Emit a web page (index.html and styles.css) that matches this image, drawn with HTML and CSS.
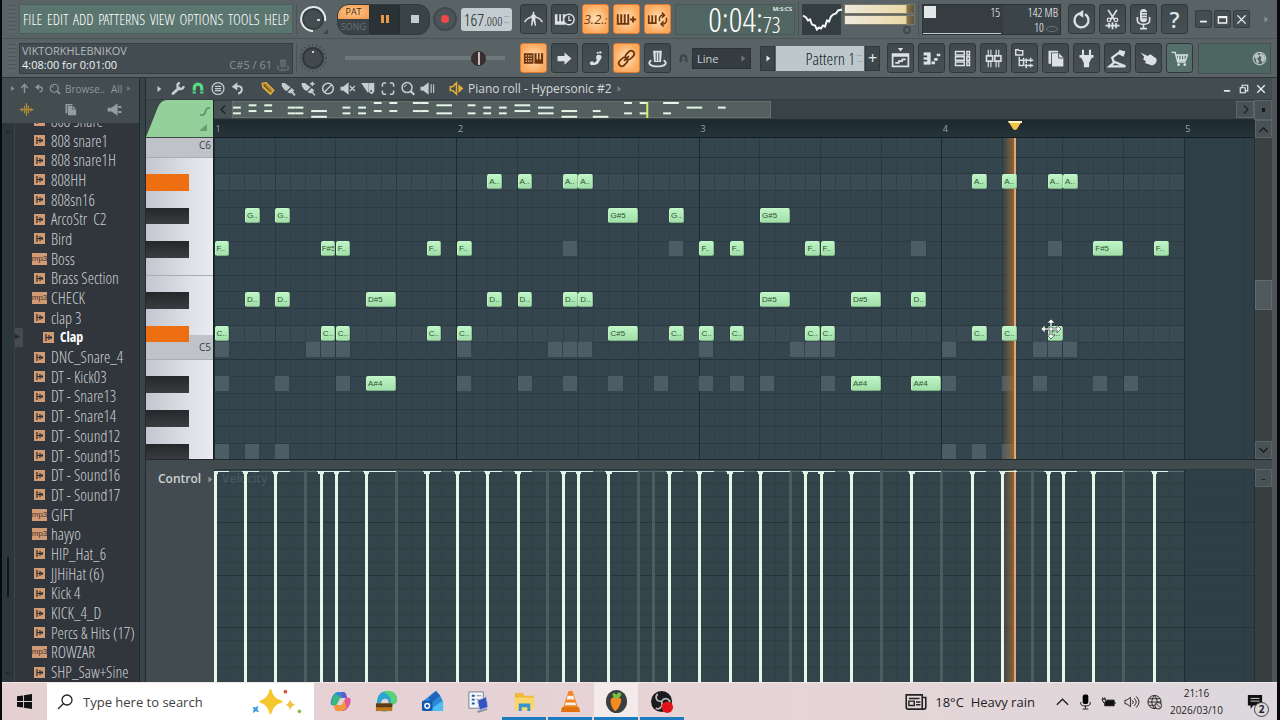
FILE: index.html
```html
<!DOCTYPE html>
<html lang="en">
<head>
<meta charset="utf-8">
<title>Piano roll - Hypersonic #2</title>
<link rel="stylesheet" href="styles.css">
</head>
<body>
<svg class="defs" aria-hidden="true">
  <defs>
    <symbol id="metronome" viewBox="0 0 24 24"><path d="M12 3v4M9.500 9Q4 11 2 15M14.500 9Q20 11 22 15" fill="none" stroke="currentColor" stroke-width="1.800"/><path d="M12 5l3 3-1 4 1 7h-1.500L12 13l-1.500 6H9l1-7-1-4z" fill="currentColor"/></symbol>
    <symbol id="wait" viewBox="0 0 24 24"><path d="M1 6h12v12H1z" fill="currentColor"/><path d="M5 6v8M9 6v8" stroke="#3c464a" stroke-width="2"/><circle cx="17" cy="12" r="6" fill="#3c464a" stroke="currentColor" stroke-width="1.600"/><path d="M17 8v5h3" fill="none" stroke="currentColor" stroke-width="1.400"/></symbol>
    <symbol id="keysplus" viewBox="0 0 24 24"><path d="M2 6v12M6 6v9M10 6v9M14 6v12M1 17h14M6 13v4M10 13v4" fill="none" stroke="currentColor" stroke-width="2.200"/><path d="M16 12h7M19.500 8.500v7" stroke="currentColor" stroke-width="2.200"/></symbol>
    <symbol id="keysloop" viewBox="0 0 24 24"><path d="M2 7v9M6 7v9M10 7v9M1 16h10" fill="none" stroke="currentColor" stroke-width="2"/><path d="M14.500 14a4 5 0 0 1 4.500-7M22 10a4 5 0 0 1-4.500 7M17 4l3 3-3 3M19 20l-3-3 3-3" fill="none" stroke="currentColor" stroke-width="1.700"/></symbol>
    <symbol id="typing" viewBox="0 0 24 24"><path d="M1 6h11v12H1z" fill="currentColor"/><path d="M3 9h8M3 12h8M3 15h8" stroke="#ffd9a0" stroke-width="1.200" stroke-dasharray="1.500 1.200"/><path d="M13 6h10v12H13z" fill="currentColor"/><path d="M16.300 6v7M19.700 6v7" stroke="#ffd9a0" stroke-width="1.500" fill="none"/></symbol>
    <symbol id="arrow" viewBox="0 0 24 24"><path d="M4 9h8V5l8 7-8 7v-4H4z" fill="currentColor"/></symbol>
    <symbol id="slide" viewBox="0 0 24 24"><path d="M14 8c2-1 5 0 5 2 0 3-2 3-3 6s-5 4-8 3c-1-1 0-2 2-2 3-1 4-3 3-5-1-1 0-3 1-4z" fill="currentColor"/><circle cx="8" cy="17.500" r="2.300" fill="currentColor"/><circle cx="14.500" cy="5.500" r="1.200" fill="currentColor"/><circle cx="17.500" cy="5" r="1.400" fill="currentColor"/></symbol>
    <symbol id="link" viewBox="0 0 24 24"><g transform="rotate(-45 12 12)" fill="none" stroke="currentColor" stroke-width="2"><rect x="1" y="8.500" width="11" height="7" rx="3.500"/><rect x="12" y="8.500" width="11" height="7" rx="3.500"/><path d="M8 12h8"/></g></symbol>
    <symbol id="hat" viewBox="0 0 24 24"><path d="M7 3h10l-1 13H8z" fill="currentColor"/><path d="M10.500 5v10M13.500 5v10" stroke="#3c464a"/><path d="M5 14c-5 3-2 7 7 7s12-4 7-7" fill="none" stroke="currentColor" stroke-width="2.200"/></symbol>
    <symbol id="magnet" viewBox="0 0 24 24"><path d="M6 20V11a6 6 0 0 1 12 0v9" fill="none" stroke="currentColor" stroke-width="5"/><path d="M3 16h18" stroke="#414b4f" stroke-width="1.500"/></symbol>
    <symbol id="playlist" viewBox="0 0 24 24"><path d="M9 0h6l-3 4z" fill="currentColor"/><path d="M3 7h18v14H3zM3 9h18" fill="none" stroke="currentColor" stroke-width="2"/><path d="M6 17h4v-2h4v-2h4" fill="none" stroke="currentColor" stroke-width="1.800"/></symbol>
    <symbol id="roll" viewBox="0 0 24 24"><path d="M3 5h8v14H3z" fill="currentColor"/><path d="M2 9.500h5M2 14.500h5" stroke="#3c464a" stroke-width="2"/><path d="M12 17h4M15 13h4M18 8h4" stroke="currentColor" stroke-width="3"/></symbol>
    <symbol id="rack" viewBox="0 0 24 24"><path d="M4 4h10v4H4zM4 10h10v4H4zM4 16h10v4H4zM17 4h3v4h-3zM17 10h3v4h-3zM17 16h3v4h-3z" fill="none" stroke="currentColor" stroke-width="1.700"/></symbol>
    <symbol id="mixer" viewBox="0 0 24 24"><path d="M6 2v6M9 2v6M15 2v6M18 2v6M6 16v6M9 16v6M15 16v6M18 16v6" stroke="currentColor" stroke-width="1.300"/><path d="M4 9h7v6H4zM13.500 9h7v6h-7z" fill="none" stroke="currentColor" stroke-width="1.800"/></symbol>
    <symbol id="tree" viewBox="0 0 24 24"><path d="M2 2h3l1 1h4v5H2zM6 10v10h5M6 14h5M11 11v9M14 12v5M14 18v5M12 14h10M12 20h10M19 11v5M19 18v4" fill="none" stroke="currentColor" stroke-width="1.600"/></symbol>
    <symbol id="pages" viewBox="0 0 24 24"><path d="M4 3h11v2H7v13H4z" fill="currentColor"/><path d="M8 6h8l5 5v10H8z" fill="currentColor"/><path d="M15.500 6v5.500H21" stroke="#3c464a" fill="none"/></symbol>
    <symbol id="plug" viewBox="0 0 24 24"><path d="M8 2v6M16 2v6" stroke="currentColor" stroke-width="2.400"/><path d="M4 8h16v3h-2l-3 6v5H9v-5l-3-6H4z" fill="currentColor"/></symbol>
    <symbol id="lamp" viewBox="0 0 24 24"><path d="M3 21h18L9 16zM8 17L6 11l8-6" fill="none" stroke="currentColor" stroke-width="2.600"/><path d="M14 2l7 2-2 6-6-3z" fill="currentColor"/></symbol>
    <symbol id="hand" viewBox="0 0 24 24"><path d="M3 5l8 4 3-2 7 5c1 4-1 7-5 8l-8-3 1-2-3-2 1-3z" fill="currentColor"/></symbol>
    <symbol id="cart" viewBox="0 0 24 24"><path d="M3 5h4l3 11h9M8 8h13l-2 6H9M11 8v6M14 8v6M17 8v6" fill="none" stroke="currentColor" stroke-width="1.600"/><circle cx="11" cy="19" r="1.500" fill="currentColor"/><circle cx="18" cy="19" r="1.500" fill="currentColor"/></symbol>
    <symbol id="globe" viewBox="0 0 24 24"><circle cx="12" cy="12" r="10" fill="#4c6660" stroke="currentColor" stroke-width="2"/><path d="M3 8l5-4 4 3-2 4-3 1 4 3-1 6-3-3-1-5zM13 3l7 4 1 6-4 6-3-5 1-4-3-3z" fill="currentColor"/></symbol>
    <symbol id="undo" viewBox="0 0 24 24"><path d="M9 5.500a8 8 0 1 0 7 0.500" fill="none" stroke="currentColor" stroke-width="2.600"/><path d="M14 1v9L7 5.500z" fill="currentColor"/></symbol>
    <symbol id="scissors" viewBox="0 0 24 24"><path d="M7 1l7 11M17 1l-7 11M4 19h16M8 16v6M12 15v8M16 16v6" stroke="currentColor" stroke-width="2"/><circle cx="8" cy="12.500" r="2" fill="none" stroke="currentColor" stroke-width="1.500"/><circle cx="16" cy="12.500" r="2" fill="none" stroke="currentColor" stroke-width="1.500"/></symbol>
    <symbol id="mic" viewBox="0 0 24 24"><rect x="8" y="0" width="8" height="15" rx="4" fill="currentColor"/><path d="M10 4h6M10 7h6M10 10h6" stroke="#3c464a"/><path d="M5 9v4c0 6 14 6 14 0V9M12 18v4M8 22.500h8" fill="none" stroke="currentColor" stroke-width="1.900"/></symbol>
    <symbol id="wrench" viewBox="0 0 24 24"><path d="M4 20l10-9" stroke="currentColor" stroke-width="4.500" stroke-linecap="round"/><path d="M21 8a5 5 0 1 1-6-5" fill="none" stroke="currentColor" stroke-width="3.500"/></symbol>
    <symbol id="menu" viewBox="0 0 24 24"><circle cx="12" cy="12" r="9.500" fill="none" stroke="currentColor" stroke-width="2"/><path d="M7 8.500h10M7 12h10M7 15.500h10" stroke="currentColor" stroke-width="2"/></symbol>
    <symbol id="back" viewBox="0 0 24 24"><path d="M8 9c6-2 11 0 10 6-1 3-3 5-6 5" fill="none" stroke="currentColor" stroke-width="3"/><path d="M11 2v13L2 9z" fill="currentColor"/></symbol>
    <symbol id="pencil" viewBox="0 0 24 24"><path d="M3 4l6-1 12 12-5 6L4 10z" fill="#6d5a38" stroke="currentColor" stroke-width="2.600"/><path d="M8 6l11 11M5 9l12 11" stroke="currentColor" stroke-width="1.600"/></symbol>
    <symbol id="brush" viewBox="0 0 24 24"><path d="M2 8V3h5l9 7-6 6-4-2z" fill="currentColor"/><path d="M11 18l7-7 4 4-5 5z" fill="currentColor"/><path d="M19 18l4 5" stroke="currentColor" stroke-width="3"/></symbol>
    <symbol id="brushplus" viewBox="0 0 24 24"><path d="M2 8V3h5l9 7-6 6-4-2z" fill="currentColor"/><path d="M11 18l7-7 4 4-5 5z" fill="currentColor"/><path d="M19 18l4 5M19 1v7M15.500 4.500h7" stroke="currentColor" stroke-width="2.400"/></symbol>
    <symbol id="ban" viewBox="0 0 24 24"><circle cx="12" cy="12" r="8.500" fill="none" stroke="currentColor" stroke-width="2.400"/><path d="M6 18L18 6" stroke="currentColor" stroke-width="2.400"/></symbol>
    <symbol id="mute" viewBox="0 0 24 24"><path d="M0 9h4l9-7v20l-9-7H0z" fill="currentColor"/><path d="M15 8l8 8M23 8l-8 8" stroke="currentColor" stroke-width="2"/></symbol>
    <symbol id="slice" viewBox="0 0 24 24"><path d="M1 3h11v16z" fill="currentColor"/><path d="M12.500 3H22v14l-4 4-5.500-4z" fill="currentColor"/><circle cx="17" cy="16" r="1.700" fill="#454f52"/></symbol>
    <symbol id="select" viewBox="0 0 24 24"><path d="M3 9V6q0-3 3-3h3M15 3h3q3 0 3 3v3M21 15v3q0 3-3 3h-3M9 21H6q-3 0-3-3v-3" fill="none" stroke="currentColor" stroke-width="2.400"/></symbol>
    <symbol id="zoomer" viewBox="0 0 24 24"><circle cx="10.500" cy="10.500" r="8" fill="none" stroke="currentColor" stroke-width="2.400"/><path d="M16 16l6 6" stroke="currentColor" stroke-width="3.500"/><path d="M6 10a5 5 0 0 1 4-4" fill="none" stroke="currentColor" stroke-width="1.500"/></symbol>
    <symbol id="playback" viewBox="0 0 24 24"><path d="M0 9h4l9-7v20l-9-7H0z" fill="currentColor"/><path d="M17 5v14M21 5v14" stroke="currentColor" stroke-width="1.800"/></symbol>
    <symbol id="speaker" viewBox="0 0 24 24"><path d="M2 9h4l6-6v18l-6-6H2z" fill="none" stroke="currentColor" stroke-width="2.400"/><path d="M15 5l8 7-8 7z" fill="currentColor"/></symbol>
    <symbol id="up" viewBox="0 0 24 24"><path d="M12 22V6M5 11l7-8 7 8" fill="none" stroke="currentColor" stroke-width="3"/></symbol>
    <symbol id="wave" viewBox="0 0 24 24"><path d="M1 12h22M5 9v6M9 6v12M12 2v20M15 6v12M19 9v6" stroke="currentColor" stroke-width="2"/></symbol>
    <symbol id="horn" viewBox="0 0 24 24"><path d="M1 9h6l10-7v20L7 15H1z" fill="currentColor"/><path d="M18 8h5M18 16h5" stroke="currentColor" stroke-width="3"/></symbol>
    <symbol id="sample" viewBox="0 0 11 11"><path d="M0 0h11v11H0z" fill="#d09a75"/><path d="M3 2v7M3 5.500h6M6 3v5M8 4v3" stroke="#2e2a2c" stroke-width="1.200"/></symbol>
    <symbol id="chev-up" viewBox="0 0 16 16"><path d="M3 11l5-5 5 5" fill="none" stroke="currentColor" stroke-width="1.600"/></symbol>
    <symbol id="chev-right" viewBox="0 0 16 16"><path d="M6 3l5 5-5 5" fill="none" stroke="currentColor" stroke-width="1.600"/></symbol>
    <symbol id="tri" viewBox="0 0 8 8"><path d="M2 0l5 4-5 4z" fill="currentColor"/></symbol>
    <symbol id="min" viewBox="0 0 16 16"><path d="M3 11h10" stroke="currentColor" stroke-width="2.600"/></symbol>
    <symbol id="max" viewBox="0 0 16 16"><path d="M2 4h12v9H2zM2 5h12" fill="none" stroke="currentColor" stroke-width="2"/></symbol>
    <symbol id="restore" viewBox="0 0 16 16"><path d="M2 6h8v8H2zM5 5V2h9v9h-3" fill="none" stroke="currentColor" stroke-width="1.800"/></symbol>
    <symbol id="close" viewBox="0 0 16 16"><path d="M2 2l12 12M14 2L2 14" stroke="currentColor" stroke-width="2"/></symbol>
  </defs>
</svg>

<div class="app">
  <header class="toolbars">
    <div class="bar">
      <span class="grip"></span>
      <nav class="menu">
        <button>FILE</button><button>EDIT</button><button>ADD</button><button>PATTERNS</button><button>VIEW</button><button>OPTIONS</button><button>TOOLS</button><button>HELP</button>
      </nav>
      <div class="knob-cell">
        <svg class="knob" viewBox="0 0 30 30"><circle cx="15" cy="15" r="10" fill="#444d50" stroke="#363e41" stroke-width="2"/><path d="M15 27A12 12 0 1 1 27 17" fill="none" stroke="#e4eae9" stroke-width="2"/><path d="M19 16h3" stroke="#cfd6d6" stroke-width="2"/><path d="M30 25v5h-5z" fill="#3c4548"/></svg>
      </div>
      <div class="transport">
        <div class="mode"><button class="pat">PAT</button><button class="song">SONG</button></div>
        <button class="pause" aria-label="Pause"><i></i><i></i></button>
        <button class="stop" aria-label="Stop"><i></i></button>
      </div>
      <button class="record" aria-label="Record"><i></i></button>
      <output class="tempo">167<small>.000</small><span class="spin"></span></output>
      <div class="tools">
        <button class="tb" aria-label="Metronome"><svg><use href="#metronome"/></svg></button>
        <button class="tb" aria-label="Wait for input"><svg><use href="#wait"/></svg></button>
        <button class="tb on count">3.2.<small>:</small></button>
        <button class="tb on" aria-label="Blend notes"><svg><use href="#keysplus"/></svg></button>
        <button class="tb on" aria-label="Loop record"><svg><use href="#keysloop"/></svg></button>
      </div>
      <output class="clock"><span class="big">0:04:</span><span class="cents"><span class="unit">M:S:CS</span><span class="hundredths">73</span></span></output>
      <div class="scope">
        <svg class="scope-wave" viewBox="0 0 39 30"><path d="M1 11l3 2 2 3 2-1 2 5 3 1 2 4 2-2 2 1 2-3 2 1 2-6 2 1 2-5 2-2 3-1 2-3 4-1" fill="none" stroke="#f1f5f5" stroke-width="2"/></svg>
        <div class="meters"><i></i><i></i><b></b></div>
      </div>
      <div class="cpu">
        <svg class="cpu-graph" viewBox="0 0 80 30" preserveAspectRatio="none"><path d="M1 1h12v12H1z" fill="#e1e6e7"/><path d="M0 28.500h78" stroke="#c4cbcd"/></svg>
        <span class="cpu-n">15</span><span class="cpu-m">142 MB<br>10 <em></em></span>
      </div>
      <div class="tools right-tools">
        <button class="tb" aria-label="Undo"><svg><use href="#undo"/></svg></button>
        <button class="tb" aria-label="Cut"><svg><use href="#scissors"/></svg></button>
        <button class="tb" aria-label="Record audio"><svg><use href="#mic"/></svg></button>
        <button class="tb help">?</button>
      </div>
      <div class="win">
        <button aria-label="Minimize"><svg><use href="#min"/></svg></button>
        <button aria-label="Maximize"><svg><use href="#max"/></svg></button>
        <button aria-label="Close"><svg><use href="#close"/></svg></button>
      </div>
      <svg class="tri far"><use href="#tri"/></svg>
    </div>
    <div class="bar">
      <span class="grip"></span>
      <div class="hint"><span>VIKTORKHLEBNIKOV</span><span class="hint-line"><b>4:08:00 for 0:01:00</b><em>C#5 / 61</em><svg><use href="#hat"/></svg></span></div>
      <div class="knob-cell">
        <svg class="knob" viewBox="0 0 30 30"><circle cx="15" cy="15" r="13" fill="none" stroke="#3c4548" stroke-width="2" stroke-dasharray="1 3"/><circle cx="15" cy="15" r="10" fill="#41494c" stroke="#30383a" stroke-width="2"/><path d="M15 8v2" stroke="#c6cccc" stroke-width="2"/></svg>
      </div>
      <label class="pitch"><input type="range" min="0" max="100" value="87" aria-label="Pitch"></label>
      <div class="tools">
        <button class="tb on" aria-label="Typing keyboard"><svg><use href="#typing"/></svg></button>
        <button class="tb" aria-label="Step"><svg><use href="#arrow"/></svg></button>
        <button class="tb" aria-label="Slide"><svg><use href="#slide"/></svg></button>
        <button class="tb on" aria-label="Link"><svg><use href="#link"/></svg></button>
        <button class="tb" aria-label="Performance"><svg><use href="#hat"/></svg></button>
      </div>
      <div class="snap"><svg class="snap-mag"><use href="#magnet"/></svg><button class="snap-val">Line<svg class="tri"><use href="#tri"/></svg></button></div>
      <div class="pattern"><button class="pat-side" aria-label="Pattern menu"><svg class="tri"><use href="#tri"/></svg></button><button class="pat-name">Pattern 1<span class="spin"></span></button><button class="pat-side">+</button></div>
      <div class="tools views">
        <button class="tb" aria-label="Playlist"><svg><use href="#playlist"/></svg></button>
        <button class="tb" aria-label="Piano roll"><svg><use href="#roll"/></svg></button>
        <button class="tb" aria-label="Channel rack"><svg><use href="#rack"/></svg></button>
        <button class="tb" aria-label="Mixer"><svg><use href="#mixer"/></svg></button>
        <button class="tb" aria-label="Browser"><svg><use href="#tree"/></svg></button>
        <button class="tb" aria-label="Files"><svg><use href="#pages"/></svg></button>
        <button class="tb" aria-label="Plugins"><svg><use href="#plug"/></svg></button>
        <button class="tb" aria-label="Tempo tapper"><svg><use href="#lamp"/></svg></button>
        <button class="tb" aria-label="Touch"><svg><use href="#hand"/></svg></button>
        <button class="tb shop" aria-label="Shop"><svg><use href="#cart"/></svg></button>
      </div>
      <div class="news"><svg><use href="#globe"/></svg></div>
    </div>
  </header>

  <main class="work">
    <aside class="browser">
      <div class="browser-head">
        <div class="crumbs"><svg class="tri"><use href="#tri"/></svg><svg><use href="#up"/></svg><svg><use href="#back"/></svg><svg class="mag"><use href="#zoomer"/></svg><span>Browse..</span><span class="all">All</span><svg class="tri dim"><use href="#tri"/></svg></div>
        <div class="tabs"><svg class="gold"><use href="#wave"/></svg><svg><use href="#pages"/></svg><svg><use href="#horn"/></svg></div>
      </div>
      <div class="browser-body">
        <div class="strip"><svg><use href="#chev-up"/></svg><i></i><svg class="flip"><use href="#chev-up"/></svg></div>
        <ul class="files" id="files"></ul>
      </div>
    </aside>
    <div class="divider"></div>
    <section class="roll">
      <div class="roll-title">
        <svg class="tri"><use href="#tri"/></svg>
        <svg><use href="#wrench"/></svg><svg class="green"><use href="#magnet"/></svg><svg><use href="#menu"/></svg><svg><use href="#back"/></svg>
        <svg class="gold first-tool"><use href="#pencil"/></svg><svg><use href="#brush"/></svg><svg><use href="#brushplus"/></svg><svg><use href="#ban"/></svg><svg><use href="#mute"/></svg><svg><use href="#slice"/></svg><svg><use href="#select"/></svg><svg><use href="#zoomer"/></svg><svg><use href="#playback"/></svg>
        <svg class="gold title-icon"><use href="#speaker"/></svg>
        <h1>Piano roll - Hypersonic #2</h1><svg class="tri dim"><use href="#tri"/></svg>
        <div class="roll-win"><button aria-label="Minimize"><svg><use href="#min"/></svg></button><button aria-label="Restore"><svg><use href="#restore"/></svg></button><button aria-label="Close"><svg><use href="#close"/></svg></button></div>
      </div>
      <div class="corner"><svg viewBox="0 0 67 38" preserveAspectRatio="none"><path d="M0 37L12 7Q15 0 21 0h46v37z" fill="#93d09a"/><path d="M54 15h3c3 0 2-7 5-7h2" fill="none" stroke="#5f8a68" stroke-width="1.500"/><path d="M53 31l8-7v7z" fill="#6a9a72"/></svg></div>
      <div class="overview"><button class="ov-btn" aria-label="Scroll left"><svg class="flip-x"><use href="#chev-right"/></svg></button><svg class="map" id="map"></svg><span class="ov-rest"></span><button class="ov-btn lit" aria-label="Scroll right"><svg><use href="#chev-right"/></svg></button></div>
      <button class="dot-btn" aria-label="Options"><i></i></button>
      <div class="ruler" id="ruler"></div>
      <div class="keys" id="keys"></div>
      <div class="grid" id="grid"></div>
      <div class="vscroll"><button aria-label="Up"><svg><use href="#chev-up"/></svg></button><span class="track"><i></i></span><button aria-label="Down"><svg class="flip"><use href="#chev-up"/></svg></button></div>
      <div class="splitter"></div>
      <div class="control"><span>Control</span><svg class="tri"><use href="#tri"/></svg></div>
      <div class="velocity" id="velocity"></div>
      <div class="vscroll low"><button>-</button></div>
    </section>
  </main>

  <footer class="taskbar">
    <button class="start" aria-label="Start"><svg viewBox="0 0 16 16"><path d="M0 2.500l6.500-1v6H0zM7.500 1.300L16 0v7.500H7.500zM0 8.500h6.500v6L0 13.500zM7.500 8.500H16V16l-8.500-1.300z" fill="#111"/></svg></button>
    <label class="search"><svg viewBox="0 0 16 16"><circle cx="10" cy="6" r="5" fill="none" stroke="#222" stroke-width="1.300"/><path d="M6.500 9.500L1 15" stroke="#222" stroke-width="1.300"/></svg><input type="text" placeholder="Type here to search" aria-label="Search"><svg class="sparkle" viewBox="0 0 58 30"><path d="M22 2q2 10 12 12.500Q24 17 22 27q-2-10-11-12.500Q20 12 22 2z" fill="#f5c62d" stroke="#f5c62d" stroke-width="2" stroke-linejoin="round"/><path d="M43 12q1 5 6 6-5 1-6 6-1-5-5-6 4-1 5-6z" fill="#f2c33c"/><path d="M3 20l3 1 3-2-1 4 2 3-4-1-3 2 1-4z" fill="#3d9bd8"/><circle cx="38" cy="4" r="2" fill="#d85b34"/><circle cx="53" cy="25" r="2" fill="#8bc04b"/></svg></label>
    <div class="apps">
      <button aria-label="Copilot"><svg viewBox="0 0 24 24"><path d="M9 2h6c3 0 3 3 4 6h-7c-3 0-4 8-6 8H3C0 15 3 3 9 2z" fill="#2c8bd8"/><path d="M3 11l3-7 7 4c-3 1-4 8-6 8H3z" fill="#39b77c"/><path d="M15 22H9c-3 0-3-3-4-6h7c3 0 4-8 6-8h3c4 1 0 13-6 14z" fill="#e0559b"/><path d="M5 16h7c2 0 3-3 4-6l2 8c-1 3-4 4-9 4-3 0-3-3-4-6z" fill="#f39a3a"/><path d="M13 2c4 0 4 2 6 6h-6z" fill="#6a55cf"/></svg></button>
      <button aria-label="Edge"><svg viewBox="0 0 24 24"><path d="M2 13C2 5 7 1 13 1c6 0 10 4 10 9 0 4-4 6-8 5-2-1 0-3-2-5-3-2-7 0-7 5 0 4 4 7 8 7C7 24 2 20 2 13z" fill="#2ba6d0"/><path d="M9 2c8-4 15 2 14 9-1 4-5 5-8 4 4-4 0-11-6-13z" fill="#5bd27a"/><path d="M1 14h17v8H1z" fill="#b97a1e"/><path d="M1 14h17v4H1z" fill="#5b3a17"/></svg></button>
      <button aria-label="Outlook"><svg viewBox="0 0 24 24"><path d="M3 11L15 1l5 5 3 6v10H7z" fill="#2e88d8"/><path d="M8 8l8-7 4 5-9 7z" fill="#1f62ba"/><path d="M7 22l16-11v11z" fill="#4dbdf2"/><rect x="1" y="11" width="11" height="11" rx="2" fill="#1358ad"/><circle cx="6.500" cy="16.500" r="2.500" fill="none" stroke="#fff" stroke-width="1.500"/></svg></button>
      <button aria-label="Notes"><svg viewBox="0 0 24 24"><path d="M2 2h15v17H2z" fill="#f6f8fb" stroke="#6f7f93"/><path d="M5 6h3M5 10h3M5 14h3" stroke="#2454a5" stroke-width="2"/><path d="M10 6h5M10 10h5" stroke="#7d8ba0"/><path d="M11 11l9-4 2 11-9 3z" fill="#3154c0" stroke="#bdc7df"/><path d="M11 23l10-3" stroke="#8893a6" stroke-width="2"/></svg></button>
      <button class="run" aria-label="File Explorer"><svg viewBox="0 0 24 24"><path d="M2 3h8l2 3h10v14H2z" fill="#f0b93a"/><path d="M2 8h20v13H2z" fill="#fbd668"/><path d="M6 22v-8h12v8h-3v-4H9v4z" fill="#3a92d0"/></svg></button>
      <button class="run" aria-label="VLC"><svg viewBox="0 0 24 24"><path d="M10 1h4l6 18H4z" fill="#f1851f"/><path d="M9 6h6l1 4H8zM7 13h10l1 3H6z" fill="#f7f0ea"/><path d="M3 18h18l1 5H2z" fill="#e0710f"/></svg></button>
      <button class="run active" aria-label="FL Studio"><svg viewBox="0 0 24 24"><ellipse cx="12" cy="12" rx="11" ry="12" fill="#3a4040"/><path d="M6 10c2-4 9-4 11 0 0 4-3 10-6 12-3-1-6-8-5-12z" fill="#f58a1f"/><path d="M11 9C8 7 7 4 9 3c1 0 2 1 3 2 1-3 4-3 5-1 0 3-3 5-6 5z" fill="#79c142"/></svg></button>
      <button class="run" aria-label="OBS"><svg viewBox="0 0 24 24"><circle cx="11" cy="12" r="11" fill="#1b1b1d"/><path d="M11 12c-6 0-7-5-4-8M11 12c3-5 8-3 9 1M11 12c2 5-2 9-6 7" fill="none" stroke="#bbb" stroke-width="1.800"/><circle cx="17" cy="18" r="6" fill="#e0121a"/></svg></button>
    </div>
    <div class="tray">
      <svg class="paper" viewBox="0 0 24 18"><path d="M1 1h18v16H3q-2 0-2-2zM19 4h4v11q0 2-2 2h-3M4 5h12" fill="none" stroke="#222" stroke-width="1.800"/><path d="M4 8h6v5H4zM12 9h5M12 12h5" fill="none" stroke="#222" stroke-width="1.600"/></svg>
      <span class="weather">18°C&nbsp; Heavy rain</span>
      <svg viewBox="0 0 16 16"><path d="M2 11l6-6 6 6" fill="none" stroke="#222" stroke-width="1.500"/></svg>
      <svg viewBox="0 0 16 16"><rect x="5" y="0" width="6" height="10" rx="2"/><path d="M3 8v2c0 3 10 3 10 0V8M8 12v3M5 15.500h6" fill="none" stroke="#111"/></svg>
      <svg viewBox="0 0 16 16"><path d="M6 6h8v6H4V9" fill="#111" stroke="#111"/><path d="M15 8v2M1 5h4v2L3 9zM2 3v2M4 3v2" stroke="#111" fill="none"/></svg>
      <svg viewBox="0 0 16 16"><path d="M1 6h2l4-3v10l-4-3H1zM9 6q2 2 0 4M11 4q4 4 0 8M13 2q6 6 0 12" fill="none" stroke="#222"/></svg>
      <svg viewBox="0 0 16 16"><circle cx="8" cy="8" r="7" fill="none" stroke="#222"/><path d="M1 8h14M8 1q-6 7 0 14M8 1q6 7 0 14M2 4.500h12M2 11.500h7" fill="none" stroke="#222"/><circle cx="12" cy="12" r="3.500" fill="#dcd5d8" stroke="#222"/><path d="M10 10l4 4" stroke="#222"/></svg>
      <time class="time">21:16<br>2026/03/10</time>
      <button class="notif" aria-label="Notifications"><svg viewBox="0 0 18 18"><path d="M1 1h16v12H7l-3 4v-4H1z" fill="#111"/><path d="M4 5h10M4 8h10" stroke="#ddd"/></svg><b>2</b></button>
    </div>
  </footer>
</div>
<script src="app.js"></script>
</body>
</html>
```

FILE: styles.css
```css
* { box-sizing: border-box; }
html, body { height: 100%; margin: 0; }
body { background: #08090a; font-family: "Open Sans", "Noto Sans", sans-serif; font-size: 12px; color: #c9cfd1; overflow: hidden; }
button { font: inherit; color: inherit; border: 0; padding: 0; margin: 0; background: none; }
svg { display: block; overflow: visible; }
.defs { position: absolute; width: 0; height: 0; }
.app { height: 100vh; display: flex; flex-direction: column; }
.menu, .tempo, .clock, .cpu, .pat-name, .files { font-family: "Open Sans Condensed Light", "Liberation Sans Narrow", "Open Sans", sans-serif; font-weight: 400; }

/* toolbars */
.toolbars { margin: 0 3px 0 2px; background: #596366; border-bottom: 1px solid #2d3537; }
.bar { display: flex; align-items: center; height: 38px; padding-left: 5px; }
.bar + .bar { border-top: 1px solid #4a5356; height: 39px; }
.grip { width: 8px; height: 28px; margin-right: 4px; background: repeating-linear-gradient(#4b5558 0 1px, #5c666a 1px 4px); }
.menu { width: 274px; height: 30px; background: #5b756f; border: 1px solid #4b5d59; display: flex; align-items: center; justify-content: space-between; padding: 0 3px; font-size: 15px; color: #fff; }
.hint { width: 274px; height: 31px; background: #434c50; border: 1px solid #363e41; padding: 0 2px; font-size: 11px; line-height: 14px; display: flex; flex-direction: column; color: #b4babc; }
.hint-line { display: flex; }
.hint b { font-weight: 400; color: #eef2f2; flex: 1; }
.hint em { font-style: normal; color: #8b9395; }
.hint svg { width: 14px; height: 14px; color: #6a7376; margin-left: 4px; }
.knob-cell { width: 41px; border-left: 1px solid #4a5356; margin-left: 3px; padding-left: 1px; }
.knob { width: 30px; height: 30px; }
.transport { display: flex; width: 93px; height: 31px; border-radius: 12px; overflow: hidden; background: #3a4347; border: 1px solid #333b3e; }
.mode { width: 31px; display: flex; flex-direction: column; font-size: 9px; line-height: 13px; text-align: center; }
.pat { background: radial-gradient(#ffc98c, #f39a4d); color: #4b2a0c; height: 14px; }
.song { color: #687073; flex: 1; }
.pause, .stop { flex: 1; display: flex; align-items: center; justify-content: center; gap: 2px; border-left: 1px solid #262d30; }
.pause { background: #2b3236; }
.pause i { width: 3px; height: 8px; background: #e89a48; }
.stop i { width: 8px; height: 8px; background: #c5cccd; }
.record { width: 24px; height: 24px; border-radius: 50%; background: #4b5458; border: 2px solid #40494c; margin: 0 4px 0 3px; display: flex; align-items: center; justify-content: center; }
.record i { width: 8px; height: 8px; border-radius: 50%; background: #f04848; }
.tempo { width: 51px; height: 23px; border-radius: 3px; background: #c3cccf; color: #11191c; display: flex; align-items: center; justify-content: center; font-size: 17px; }
.tempo small { font-size: 13px; padding-top: 3px; }
.spin { width: 5px; height: 7px; margin-left: 2px; border: solid #a0abae; border-width: 1px 0; }
.tools { display: flex; gap: 4px; margin-left: 8px; }
.tb { width: 27px; height: 30px; border-radius: 3px; background: linear-gradient(#3f484c, #475054); border: 1px solid #30383b; color: #dce2e3; display: flex; align-items: center; justify-content: center; }
.tb svg { width: 21px; height: 21px; flex: none; }
.tb.on { background: radial-gradient(#ffe3b8, #fba85c 75%); border-color: #dd7c35; color: #70350c; }
.tb.count { font-size: 13px; font-style: italic; }
.tb.shop { background: #55706b; }
.tb.help { font-size: 22px; font-weight: 600; }
.clock { width: 120px; height: 31px; margin-left: 4px; background: #516661; border: 1px solid #475a56; color: #fff; display: flex; justify-content: flex-end; line-height: 29px; font-size: 34px; }
.cents { display: flex; flex-direction: column; width: 31px; }
.unit { font: 600 6px/8px "Open Sans", sans-serif; text-align: right; padding-right: 2px; }
.hundredths { font-size: 22px; line-height: 22px; }
.scope { display: flex; margin-left: 3px; padding: 0 3px; border: solid #4a5356; border-width: 0 1px; height: 36px; align-items: center; gap: 3px; }
.scope-wave { width: 39px; height: 31px; background: #343d41; }
.meters { width: 71px; height: 30px; display: flex; flex-direction: column; gap: 1px; }
.meters i { height: 10px; background: linear-gradient(90deg, #efe9dd, #ead9a6 88%, #8b7546 90%, #5b5440); border: 1px solid #7c7a6c; }
.meters b { width: 8px; height: 8px; border-radius: 50%; border: 2px solid #3f484b; align-self: flex-end; margin: 0 4px; }
.cpu { width: 139px; height: 31px; margin-left: 3px; background: #353d41; border: 1px solid #2c3437; display: flex; position: relative; color: #fff; font-size: 12px; line-height: 15px; }
.cpu-graph { position: absolute; left: 0; top: 0; width: 80px; height: 30px; }
.cpu-n { width: 77px; text-align: right; }
.cpu-m { flex: 1; text-align: right; padding-right: 2px; background: #3b4448; margin-left: 3px; }
.cpu em { display: inline-block; width: 12px; height: 6px; border: 1px solid #6b7578; border-radius: 50%; }
.right-tools { margin-left: 7px; }
.win { display: flex; gap: 2px; margin-left: 7px; flex: 0 0 auto; }
.win button { width: 17px; height: 18px; background: #444d51; border: 1px solid #363e41; border-radius: 2px; display: flex; align-items: center; justify-content: center; color: #f0f3f3; }
.win svg { width: 11px; height: 11px; }
.tri { width: 6px; height: 7px; flex: none; }
.far { margin-left: auto; margin-right: 8px; color: #899194; }
.pitch { width: 175px; padding-left: 8px; display: flex; }
.pitch input { appearance: none; width: 160px; height: 16px; margin: 0; background: linear-gradient(#69737600 6px, #6e787b 6px 10px, #69737600 10px); }
.pitch input::-webkit-slider-thumb { appearance: none; width: 15px; height: 15px; border-radius: 50%; background: linear-gradient(90deg, #3d2f31 6px, #c9c0c0 6px 8px, #3d2f31 8px); border: 1px solid #2c2627; }
.snap { display: flex; align-items: center; margin-left: 7px; gap: 3px; }
.snap-mag { width: 11px; height: 13px; color: #3c4548; }
.snap-val { width: 59px; height: 21px; background: #343c40; border: 1px solid #2b3235; display: flex; align-items: center; justify-content: space-between; padding: 0 4px; color: #ccd3d5; font-size: 11px; }
.snap-val .tri { color: #70797c; }
.pattern { display: flex; margin-left: 9px; gap: 1px; align-items: center; }
.pat-side { width: 15px; height: 25px; background: #3d464a; border: 1px solid #31393c; display: flex; align-items: center; justify-content: center; font-size: 16px; color: #e6ebeb; }
.pat-name { width: 88px; height: 25px; background: #bcc8cc; color: #11191c; display: flex; align-items: center; justify-content: flex-end; font-size: 17px; padding-right: 2px; }
.views { margin-left: 7px; }
.news { flex: 1; height: 31px; margin: 0 6px 0 5px; background: #4e6661; border: 1px solid #45514f; display: flex; align-items: center; justify-content: flex-end; padding-right: 3px; color: #b9c3c3; }
.news svg { width: 15px; height: 15px; }

/* work area */
.work { flex: 1; min-height: 0; display: flex; margin: 0 3px 0 2px; background: #424c50; border-right: 5px solid #4c5659; }
.browser { width: 137px; display: flex; flex-direction: column; background: #31353c; }
.browser-head { height: 45px; background: #434d50; flex: none; }
.crumbs { display: flex; align-items: center; height: 21px; gap: 4px; padding-left: 8px; color: #8f9799; font-size: 10px; }
.crumbs svg { width: 11px; height: 11px; }
.crumbs .mag { width: 12px; height: 12px; }
.crumbs svg.tri { width: 5px; height: 7px; }
.dim { color: #747d80; }
.all { margin-left: 2px; }
.tabs { display: flex; justify-content: space-between; padding: 3px 17px 0 17px; color: #949c9e; }
.tabs svg { width: 15px; height: 15px; }
.gold { color: #e3ad38; }
.tabs .gold { color: #b08b35; }
.browser-body { flex: 1; min-height: 0; display: flex; overflow: hidden; }
.strip { width: 13px; background: #2c373b; display: flex; flex-direction: column; align-items: center; justify-content: space-between; color: #151b1d; padding: 4px 0; border-right: 1px solid #3b4448; }
.strip svg { width: 9px; height: 9px; }
.strip i { width: 2px; height: 40px; background: #12181a; margin-top: auto; margin-bottom: 72px; }
.flip { transform: scaleY(-1); }
.flip-x { transform: scaleX(-1); }
.files { list-style: none; margin: -12px 0 0; padding: 0; flex: 1; min-width: 0; display: flex; flex-direction: column; font-size: 16px; color: #cdd2d4; }
.files li { flex: 1 1 0; min-height: 0; display: flex; align-items: center; line-height: 16px; padding-left: 19px; gap: 6px; white-space: pre; }
.files svg { width: 11px; height: 11px; flex: none; }
.files .mp3 { padding-left: 17px; gap: 4px; }
.files .badge { width: 15px; height: 12px; background: #d09a75; color: #453126; font: 8px/11px "Liberation Sans Narrow", "Liberation Sans", sans-serif; display: flex; justify-content: center; }
.files .picked { padding-left: 0; color: #fff; font-family: "Open Sans Condensed", "Liberation Sans Narrow", sans-serif; font-weight: 700; font-size: 14px; }
.files .picked::before { content: "▸"; width: 8px; height: 19px; margin-right: 14px; background: #454c50; color: #22282b; font-size: 9px; }
.divider { width: 7px; background: #37444a; border: solid #222a2d; border-width: 0 1px; }

/* piano roll */
.roll { flex: 1; min-width: 0; display: grid; grid-template-columns: 68px minmax(0, 1fr) 18px; grid-template-rows: 22px 20px 18px minmax(0, 321fr) 10px minmax(0, 213fr); }
.roll-title { grid-column: 1 / 4; display: flex; align-items: center; gap: 4px; padding-left: 10px; background: #434c50; color: #c7cdcf; border-bottom: 1px solid #363f42; }
.roll-title svg { width: 16px; height: 15px; flex: none; }
.roll-title svg.tri { width: 6px; height: 8px; margin-right: 4px; }
.roll-title .green { color: #58de80; }
.roll-title .gold { color: #e3ad38; }
.roll-title svg.dim { color: #747d80; }
.roll-title .first-tool { margin-left: 10px; }
.roll-title .title-icon { margin-left: 9px; width: 15px; }
.roll-title h1 { font-size: 12px; font-weight: 400; margin: 0; color: #d4dadb; }
.roll-win { margin-left: auto; display: flex; gap: 7px; padding-right: 6px; color: #eef2f2; }
.roll-win svg { width: 10px; height: 10px; }
.corner { grid-row: 2 / 4; background: #3f494c; border-right: 1px solid #1b2427; }
.corner svg { width: 100%; height: 100%; }
.overview { grid-column: 2; display: flex; background: #394245; padding: 1px 0; border-bottom: 1px solid #242e31; }
.ov-btn { width: 18px; background: #485154; display: flex; align-items: center; justify-content: center; color: #1c2426; }
.ov-btn svg { width: 13px; height: 13px; }
.ov-btn.lit { border: 1px solid #5d676a; }
.map { flex: 538 1 0; height: 17px; background: #54605f; border: 1px solid #65716f; }
.ov-rest { flex: 466 1 0; }
.dot-btn { background: #485154; border: 1px solid #5a6467; display: flex; align-items: center; justify-content: center; }
.dot-btn i { width: 3px; height: 4px; background: #15191b; }
.ruler { grid-column: 2; background: linear-gradient(#1c292f, #27343a); border-bottom: 1px solid #121b1f; position: relative; font-size: 9px; line-height: 17px; color: #98a3a6; }
.ruler span, .ruler svg { position: absolute; }
.ruler span { padding-left: 1px; }
.ruler svg { width: 14px; height: 10px; margin-left: -7px; top: 1px; }
.keys { grid-column: 1; grid-row: 4; background: linear-gradient(90deg, #c3c6ce, #dfe2e8 70%, #e9ebf0); position: relative; overflow: hidden; border-right: 1px solid #152024; color: #3b4145; font-size: 10px; line-height: 14px; }
.keys .black { position: absolute; left: 0; width: 43px; background: linear-gradient(#25282a, #3a3d3f); }
.keys .pressed { background: #ee6f12; }
.keys .line { position: absolute; left: 0; right: 0; border-top: 1px solid #a9adb2; }
.keys .ckey { position: absolute; left: 0; right: 0; background: #bfc2c7; padding-right: 2px; display: flex; align-items: center; justify-content: flex-end; }
.keys .ckey.first { align-items: flex-start; }
.grid, .velocity { grid-column: 2; position: relative; overflow: hidden; background: #35454d; }
.velocity { background: #34444b; border-top: 1px solid #29363b; }
.lines { position: absolute; inset: 0; width: 100%; height: 100%; }
.note, .ghost { position: absolute; height: 15px; }
.note { background: linear-gradient(#bdf5c4, #a2dfaa); border: 1px solid; border-color: #c6f7cc #8cc294 #7eb286 #c0f2c6; border-radius: 2px; color: #2f5236; font: 8px/13px "Liberation Sans", sans-serif; padding-left: 1px; overflow: hidden; white-space: nowrap; }
.note.full { padding-left: 0; }
.ghost { background: #4d5d66; }
.playhead { position: absolute; top: 0; bottom: 0; width: 13px; margin-left: -12px; background: linear-gradient(90deg, #a8692f00, #a8692fcc); border-right: 2px solid #e0a877; }
.pointer { position: absolute; width: 20px; height: 20px; margin: -10px 0 0 -10px; }
.splitter { grid-column: 1 / 4; background: #414b4e; border-top: 1px solid #20292c; }
.control { grid-column: 1; display: flex; align-items: flex-start; gap: 6px; padding: 1px 0 0 12px; color: #cdd3d4; font-size: 12px; font-weight: 600; line-height: 17px; }
.control .tri { margin-top: 6px; color: #8f999b; }
.vel-label { position: absolute; left: 8px; top: 0; font-size: 12px; line-height: 18px; font-weight: 600; color: #46575f; }
.vscroll { grid-column: 3; grid-row: 3 / 5; display: flex; flex-direction: column; background: #363e40; border-left: 1px solid #252e31; }
.vscroll button { height: 18px; background: #485154; border: 1px solid #5a6467; display: flex; align-items: center; justify-content: center; color: #12181a; }
.vscroll svg { width: 13px; height: 13px; }
.track { flex: 1; display: flex; flex-direction: column; background: #3a4143; }
.track::before { content: ""; flex: 143; }
.track::after { content: ""; flex: 131; }
.track i { height: 30px; background: #50595c; border: 1px solid #626c6f; }
.low { grid-row: 6; }

/* taskbar */
.taskbar { height: 38px; flex: none; display: flex; background: linear-gradient(90deg, #e4cfd1, #e7d4d6 60%, #dcd8dd); margin: 0 3px 0 2px; color: #1d1d1f; border-top: 1px solid #f1e6e6; }
.start { width: 45px; display: flex; align-items: center; justify-content: center; }
.start svg { width: 15px; height: 15px; }
.search { width: 267px; background: #fff; display: flex; align-items: center; padding: 0 8px 0 10px; gap: 10px; }
.search > svg { width: 16px; height: 16px; flex: none; }
.search .sparkle { width: 58px; height: 28px; }
.search input { border: 0; outline: 0; flex: 1; min-width: 0; font: 13px "Open Sans", sans-serif; padding: 0; background: none; }
.search input::placeholder { color: #3e3e40; }
.apps { display: flex; gap: 2px; margin-left: 4px; }
.apps button { width: 44px; display: flex; align-items: center; justify-content: center; border-bottom: 3px solid transparent; padding-top: 2px; }
.apps svg { width: 23px; height: 23px; }
.apps .run { border-image: linear-gradient(90deg, transparent 3px, #1f7bc0 3px 41px, transparent 41px) 3; }
.apps .active { background: #f4eaeb; border-image: none; border-color: #1f7bc0; }
.tray { margin-left: auto; display: flex; align-items: center; gap: 8px; }
.tray > svg { width: 15px; height: 16px; }
.tray .paper { width: 22px; height: 16px; }
.weather { font-size: 13px; margin-right: 12px; white-space: nowrap; }
.time { font-size: 10px; line-height: 17px; text-align: center; }
.notif { position: relative; width: 46px; height: 30px; display: flex; align-items: center; padding-left: 16px; }
.notif svg { width: 16px; height: 16px; }
.notif b { position: absolute; right: 8px; bottom: 0; width: 15px; height: 15px; border-radius: 50%; border: 1px solid #444; background: #dcd8dd; font-size: 10px; line-height: 13px; }
```

FILE: app.js
```js
const STEPS = 68.65;   // sixteenth steps visible across the grid
const HEIGHT = 321;    // design height of the note grid
const ROW = 16.86;     // height of one semitone row
const TOP = 19;        // top of the B5 row
const PLAY = 52.84;    // playhead position in steps

const px = s => ((s + 0.04) / STEPS * 100) + '%';
const span = s => (s / STEPS * 100) + '%';
const py = r => ((TOP + ROW * r) / HEIGHT * 100) + '%';
const rows = { 'A#5': 1, 'G#5': 3, 'F#5': 5, 'D#5': 8, 'C#5': 10, 'C5': 11, 'A#4': 13, 'F#4': 17 };

// [step, length, showFullName]
const notes = {
  'A#5': [[18], [20], [23], [24], [50], [52], [55], [56]],
  'G#5': [[2], [4], [26, 2], [30], [36, 2]],
  'F#5': [[0], [7, 1, 1], [8], [14], [16], [32], [34], [39], [40], [58, 2], [62]],
  'D#5': [[2], [4], [10, 2], [18], [20], [23], [24], [36, 2], [42, 2], [46]],
  'C#5': [[0], [7], [8], [14], [16], [26, 2], [30], [32], [34], [39], [40], [50], [52], [55]],
  'A#4': [[10, 2], [42, 2], [46, 2]]
};
const ghosts = {
  'F#5': [23, 30, 46, 55],
  'C5': [0, 6, 7, 8, 16, 22, 23, 24, 32, 38, 39, 40, 48, 54, 55, 56],
  'A#4': [0, 4, 8, 16, 20, 23, 26, 29, 32, 34, 36, 40, 48, 52, 54, 58, 60],
  'F#4': [0, 2, 4, 48, 50, 52]
};
const ghostStems = [6, 12, 22, 28, 29, 38, 44, 48, 54, 60];
const files = ['808 Snare', '808 snare1', '808 snare1H', '808HH', '808sn16', 'ArcoStr  C2', 'Bird', '*Boss', 'Brass Section', '*CHECK', 'clap 3', '>Clap', 'DNC_Snare_4', 'DT - Kick03', 'DT - Snare13', 'DT - Snare14', 'DT - Sound12', 'DT - Sound15', 'DT - Sound16', 'DT - Sound17', '*GIFT', '*hayyo', 'HIP_Hat_6', 'JJHiHat (6)', 'Kick 4', 'KICK_4_D', 'Percs & Hits (17)', '*ROWZAR', 'SHP_Saw+Sine'];

const byId = id => document.getElementById(id);
const add = (parent, cls, style, text) => {
  const el = document.createElement('div');
  el.className = cls;
  Object.assign(el.style, style);
  if (text) el.textContent = text;
  parent.append(el);
  return el;
};

byId('files').innerHTML = files.map(f => {
  const name = f.replace(/^[*>]/, '').replace('&', '&amp;');
  if (f[0] === '*') return `<li class="mp3"><span class="badge">mp3</span>${name}</li>`;
  return `<li class="${f[0] === '>' ? 'picked' : ''}"><svg><use href="#sample"/></svg><span>${name}</span></li>`;
}).join('');

const vline = (s, color) => `<line x1="${px(s)}" x2="${px(s)}" y1="0" y2="100%" stroke="${color}"/>`;
const hline = (y, color) => `<line x1="0" x2="100%" y1="${y}" y2="${y}" stroke="${color}"/>`;
let verticals = `<rect x="${px(64)}" width="10%" height="100%" fill="#2f3f47"/>`;
for (let s = 0; s <= 68; s++) verticals += vline(s, s % 16 === 0 ? '#1d2b31' : s % 4 === 0 ? '#2a393f' : '#30404a');
const svgOpen = '<svg class="lines" shape-rendering="crispEdges">';

// note grid
const grid = byId('grid');
let bands = '';
for (const r of [1, 10]) bands += `<rect x="0" width="100%" y="${py(r)}" height="${ROW / HEIGHT * 100}%" fill="#3a4b53"/>`;
for (let r = 0; r < 18; r++) bands += hline(py(r), r === 0 || r === 12 ? '#22323a' : '#2c3b43');
grid.innerHTML = svgOpen + bands + verticals + '</svg>';
for (const [key, list] of Object.entries(ghosts))
  for (const s of list) add(grid, 'ghost', { left: px(s), top: py(rows[key]), width: span(0.93) });
add(grid, 'playhead', { left: px(PLAY) });
for (const [key, list] of Object.entries(notes))
  for (const [s, len = 1, full] of list)
    add(grid, full ? 'note full' : 'note', { left: px(s), top: py(rows[key]), width: span(len - 0.03) }, len > 1 || full ? key : key[0] + '..');
const pointer = add(grid, 'pointer', { left: px(55.2), top: py(10.2) });
pointer.innerHTML = '<svg viewBox="0 0 20 20"><path d="M10 0l4 4h-3v5h5V6l4 4-4 4v-3h-5v5h3l-4 4-4-4h3v-5H4v3l-4-4 4-4v3h5V4H6z" fill="#f4f7f5" stroke="#34423f" stroke-width=".700"/></svg>';

// keyboard
const keys = byId('keys');
const rowHeight = n => (ROW * n / HEIGHT * 100) + '%';
add(keys, 'ckey first', { top: 0, height: py(0) }, 'C6');
add(keys, 'ckey', { top: py(10.55), height: rowHeight(1.45) }, 'C5');
for (const r of [0, 7, 12]) add(keys, 'line', { top: py(r) });
for (const r of [1, 3, 5, 8, 10, 13, 15, 17])
  add(keys, 'black' + (r === 1 || r === 10 ? ' pressed' : ''), { top: py(r), height: rowHeight(1) });

// ruler
const ruler = byId('ruler');
ruler.innerHTML = [1, 2, 3, 4, 5].map(n => `<span style="left:${px((n - 1) * 16)}">${n}</span>`).join('') +
  `<svg style="left:${px(PLAY)}" viewBox="0 0 14 10"><path d="M0 0h14L9 8q-2 2-4 0z" fill="#f2c648"/><path d="M0 0h14v2H1z" fill="#fff0c0"/></svg>`;

// velocity stems
const starts = new Map();
for (const list of Object.values(notes)) for (const [s, len = 1] of list) starts.set(s, Math.max(starts.get(s) || 1, len));
let stems = '';
for (let i = 1; i < 16; i++) stems += hline((i * 6.2) + '%', i % 4 === 0 ? '#25343b' : '#2d3d44');
stems += `<line x1="0" x2="${px(64)}" y1="1" y2="1" stroke="#5c6b70"/>`;
for (const s of ghostStems) stems += `<line x1="${px(s)}" x2="${px(s)}" y1="0" y2="100%" stroke="#4c5c63" stroke-width="3"/>`;
const velocity = byId('velocity');
let front = '';
for (const [s, len] of starts)
  front += `<line x1="${px(s + 0.03)}" x2="${px(s + 0.03)}" y1="1" y2="100%" stroke="#e6f7ea" stroke-width="3"/>` +
    `<line x1="${px(s - 0.22)}" x2="${px(s + len - 0.05)}" y1="1" y2="1" stroke="#dff5e3"/>` +
    `<line x1="${px(s - 0.15)}" x2="${px(s + 0.2)}" y1="2.500" y2="2.500" stroke="#dff5e3" stroke-width="2"/>`;
velocity.insertAdjacentHTML('beforeend', svgOpen + verticals + stems + '</svg>');
add(velocity, 'vel-label', {}, 'Velocity');
add(velocity, 'playhead', { left: px(PLAY) });
velocity.insertAdjacentHTML('beforeend', svgOpen + front + '</svg>');

// overview strip
let map = '';
for (const [key, list] of Object.entries(notes))
  for (const [s, len = 1] of list)
    map += `<rect x="${span(s)}" width="${span(len)}" y="${(rows[key] - 1) * 1.15}" height="2" fill="#e4f4e6"/>`;
map += `<rect x="${span(PLAY)}" width="2" y="0" height="16" fill="#d6ea6a"/>`;
byId('map').innerHTML = map;
```
